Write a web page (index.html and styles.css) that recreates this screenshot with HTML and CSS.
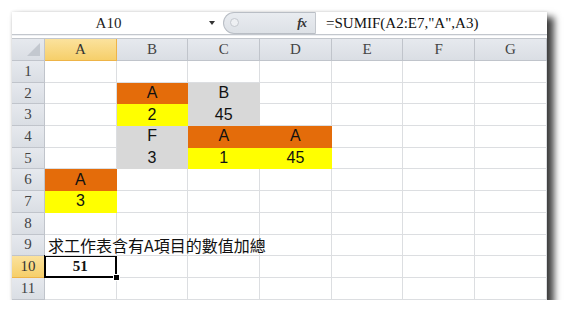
FILE: index.html
```html
<!DOCTYPE html>
<html lang="zh-Hant">
<head>
    <meta charset="UTF-8">
    <title>SUMIF</title>
    <link rel="stylesheet" href="styles.css">
</head>
<body>
    <div class="window">
        <!-- name box + formula bar -->
        <div class="formula-bar">
            <div class="name-box">A10<span class="arrow"></span></div>
            <div class="fx-pill"><span class="grip"></span><span class="fx">fx</span></div>
            <div class="formula">=SUMIF(A2:E7,"A",A3)</div>
        </div>

        <div class="sheet">
            <div class="hd corner"><span class="tri"></span></div>
            <div class="hd col active">A</div>
            <div class="hd col">B</div>
            <div class="hd col">C</div>
            <div class="hd col">D</div>
            <div class="hd col">E</div>
            <div class="hd col">F</div>
            <div class="hd col">G</div>

            <div class="hd row">1</div>
            <div class="c"></div><div class="c"></div><div class="c"></div><div class="c"></div><div class="c"></div><div class="c"></div><div class="c"></div>

            <div class="hd row">2</div>
            <div class="c"></div><div class="c orange">A</div><div class="c gray">B</div><div class="c"></div><div class="c"></div><div class="c"></div><div class="c"></div>

            <div class="hd row">3</div>
            <div class="c"></div><div class="c yellow">2</div><div class="c gray">45</div><div class="c"></div><div class="c"></div><div class="c"></div><div class="c"></div>

            <div class="hd row">4</div>
            <div class="c"></div><div class="c gray">F</div><div class="c orange">A</div><div class="c orange">A</div><div class="c"></div><div class="c"></div><div class="c"></div>

            <div class="hd row">5</div>
            <div class="c"></div><div class="c gray">3</div><div class="c yellow">1</div><div class="c yellow">45</div><div class="c"></div><div class="c"></div><div class="c"></div>

            <div class="hd row">6</div>
            <div class="c orange">A</div><div class="c"></div><div class="c"></div><div class="c"></div><div class="c"></div><div class="c"></div><div class="c"></div>

            <div class="hd row">7</div>
            <div class="c yellow">3</div><div class="c"></div><div class="c"></div><div class="c"></div><div class="c"></div><div class="c"></div><div class="c"></div>

            <div class="hd row">8</div>
            <div class="c"></div><div class="c"></div><div class="c"></div><div class="c"></div><div class="c"></div><div class="c"></div><div class="c"></div>

            <div class="hd row">9</div>
            <div class="c label">求工作表含有A項目的數值加總</div><div class="c"></div><div class="c"></div><div class="c"></div><div class="c"></div><div class="c"></div><div class="c"></div>

            <div class="hd row active">10</div>
            <div class="c selected">51<span class="handle"></span></div><div class="c"></div><div class="c"></div><div class="c"></div><div class="c"></div><div class="c"></div><div class="c"></div>

            <div class="hd row">11</div>
            <div class="c"></div><div class="c"></div><div class="c"></div><div class="c"></div><div class="c"></div><div class="c"></div><div class="c"></div>
        </div>
    </div>
</body>
</html>
```

FILE: styles.css
```css
body {
    margin: 0;
    background: #fff;
    font-family: "Liberation Serif", serif;
}
.window {
    margin: 12px 0 0 12px;
    width: 535px;
    height: 288px;
    background: #fff;
    overflow: hidden;
    box-shadow: 6px 6px 7px 1px rgba(0, 0, 0, 0.75), 0 0 3px rgba(0, 0, 0, 0.15);
}
.formula-bar {
    display: flex;
    height: 22px;
    border-bottom: 1px solid #c3c7cd;
    box-shadow: 0 1px 0 #eef0f3;
}
.name-box {
    position: relative;
    width: 211px;
    padding-right: 18px;
    box-sizing: border-box;
    text-align: center;
    font-size: 15px;
    line-height: 22px;
    color: #222;
}
.arrow {
    position: absolute;
    right: 8px;
    top: 9px;
    border-left: 3px solid transparent;
    border-right: 3px solid transparent;
    border-top: 4px solid #333;
}
.fx-pill {
    position: relative;
    width: 93px;
    box-sizing: border-box;
    background: linear-gradient(#e9ecf0, #dde1e6);
    border: 1px solid #b9bec5;
    border-right: 1px solid #c3c7cd;
    border-radius: 11px 0 0 11px;
}
.grip {
    position: absolute;
    left: 6px;
    top: 5px;
    width: 7px;
    height: 7px;
    border-radius: 50%;
    border: 1px solid #c4c8ce;
    background: #eef0f3;
}
.fx {
    position: absolute;
    right: 9px;
    top: 2px;
    font-style: italic;
    font-weight: bold;
    font-size: 13px;
    letter-spacing: -1px;
    color: #333;
}
.formula {
    flex: 1;
    padding-left: 10px;
    font-size: 15px;
    line-height: 22px;
    color: #111;
}
.sheet {
    display: grid;
    grid-template-columns: 33px repeat(7, 71.7px);
    grid-template-rows: 22px repeat(11, 21.7px);
    margin-top: 3px;
    border-top: 1px solid #c3c7cd;
}
.hd {
    display: flex;
    align-items: center;
    justify-content: center;
    background: linear-gradient(#e6e9ee, #dadee4);
    border-right: 1px solid #c0c4cb;
    border-bottom: 1px solid #c0c4cb;
    font-size: 15px;
    color: #444;
}
.corner {
    position: relative;
}
.tri {
    position: absolute;
    right: 4px;
    bottom: 4px;
    border-left: 13px solid transparent;
    border-bottom: 13px solid #c3c8cf;
}
.hd.active {
    background: linear-gradient(#fbe29d, #f6cf6a);
    border-color: #eeb448;
    color: #333;
}
.c {
    display: flex;
    align-items: center;
    justify-content: center;
    border-right: 1px solid #dcdee1;
    border-bottom: 1px solid #dcdee1;
    font-family: "Liberation Sans", "Noto Sans CJK TC", sans-serif;
    font-size: 16px;
    color: #111;
}
.orange {
    background: #e46c0a;
    border-color: #e46c0a;
}
.yellow {
    background: #ffff00;
    border-color: #ffff00;
}
.gray {
    background: #d8d8d8;
    border-color: #d8d8d8;
}
.label {
    justify-content: flex-start;
    padding-left: 3px;
    white-space: nowrap;
    overflow: visible;
    font-family: "Noto Sans CJK TC", sans-serif;
    font-size: 16px;
    z-index: 1;
}
.selected {
    position: relative;
    margin: -1px 0 0 -1px;
    border: 2px solid #000;
    font-family: "Liberation Serif", serif;
    font-weight: bold;
    font-size: 15px;
}
.handle {
    position: absolute;
    right: -5px;
    bottom: -5px;
    width: 5px;
    height: 5px;
    background: #000;
    border: 1px solid #fff;
}
```
